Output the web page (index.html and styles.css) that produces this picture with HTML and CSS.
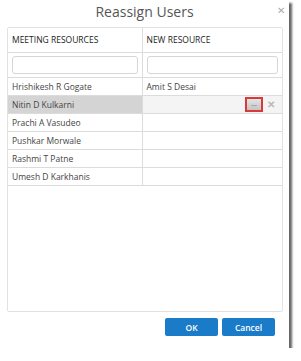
FILE: index.html
```html
<!DOCTYPE html>
<html lang="en">
<head>
    <meta charset="UTF-8">
    <title>Reassign Users</title>
    <link rel="stylesheet" href="styles.css">
</head>
<body>

    <!-- Dialog -->
    <div class="dialog">
        <div class="dialog-title">
            <span>Reassign Users</span>
            <span class="close">&#x2715;</span>
        </div>

        <div class="panel">
            <table class="grid">
                <tr class="head">
                    <th class="col-left">MEETING RESOURCES</th>
                    <th>NEW RESOURCE</th>
                </tr>
                <tr class="filter">
                    <td class="col-left"><div class="filter-box"></div></td>
                    <td><div class="filter-box"></div></td>
                </tr>
                <tr>
                    <td class="col-left">Hrishikesh R Gogate</td>
                    <td>Amit S Desai</td>
                </tr>
                <tr class="selected">
                    <td class="col-left">Nitin D Kulkarni</td>
                    <td>
                        <div class="pick">
                            <span class="dots-btn">...</span>
                            <span class="clear">&#x2715;</span>
                        </div>
                    </td>
                </tr>
                <tr>
                    <td class="col-left">Prachi A Vasudeo</td>
                    <td></td>
                </tr>
                <tr>
                    <td class="col-left">Pushkar Morwale</td>
                    <td></td>
                </tr>
                <tr>
                    <td class="col-left">Rashmi T Patne</td>
                    <td></td>
                </tr>
                <tr>
                    <td class="col-left">Umesh D Karkhanis</td>
                    <td></td>
                </tr>
            </table>
        </div>

        <div class="footer">
            <button class="button">OK</button>
            <button class="button">Cancel</button>
        </div>
    </div>

</body>
</html>
```

FILE: styles.css
```css
/* General Styling */
* {
    margin: 0;
    padding: 0;
    box-sizing: border-box;
    font-family: "Open Sans", Arial, sans-serif;
}

body {
    background-color: white;
}

/* Dialog */
.dialog {
    width: 289px;
    height: 348px;
    background: white;
    box-shadow: 3px 3px 2px rgba(0, 0, 0, 0.6);
    display: flex;
    flex-direction: column;
}

.dialog-title {
    height: 27px;
    position: relative;
    text-align: center;
    font-size: 14px;
    line-height: 24px;
    color: #555;
}

.close {
    position: absolute;
    right: 4px;
    top: 1px;
    font-size: 10px;
    line-height: 18px;
    color: #aaa;
}

/* Panel */
.panel {
    margin-left: 7px;
    width: 276px;
    height: 285px;
    border: 1px solid #e2e2e2;
    border-radius: 2px;
}

.grid {
    width: 100%;
    border-collapse: collapse;
    font-size: 8.5px;
    color: #444;
}

.grid th,
.grid td {
    text-align: left;
    height: 18px;
    padding: 0 4px;
    border-bottom: 1px solid #dcdcdc;
}

.grid .col-left {
    width: 134px;
    border-right: 1px solid #dcdcdc;
}

.grid .head th {
    height: 24px;
    font-weight: normal;
    font-size: 8.5px;
    color: #222;
}

.grid .filter td {
    height: 25px;
}

.filter-box {
    height: 18px;
    border: 1px solid #d6d6d6;
    border-radius: 3px;
}

.selected td {
    background: #f4f4f4;
}

.selected .col-left {
    background: #d4d4d4;
}

.pick {
    display: flex;
    justify-content: flex-end;
    align-items: center;
    gap: 4px;
    padding-right: 3px;
}

.dots-btn {
    width: 18px;
    height: 15px;
    border: 2px solid #d83a3a;
    background: linear-gradient(#e4e4e4, #c4c4c4);
    font-size: 7px;
    line-height: 9px;
    text-align: center;
    color: #555;
}

.clear {
    font-size: 10px;
    color: #b8b8b8;
    font-weight: bold;
}

/* Footer */
.footer {
    display: flex;
    justify-content: flex-end;
    gap: 4px;
    padding: 6px 14px 0 0;
}

.button {
    width: 53px;
    height: 18px;
    background-color: #1a7bc9;
    color: white;
    border: none;
    border-radius: 2px;
    font-size: 8.5px;
    font-weight: 600;
}
```
